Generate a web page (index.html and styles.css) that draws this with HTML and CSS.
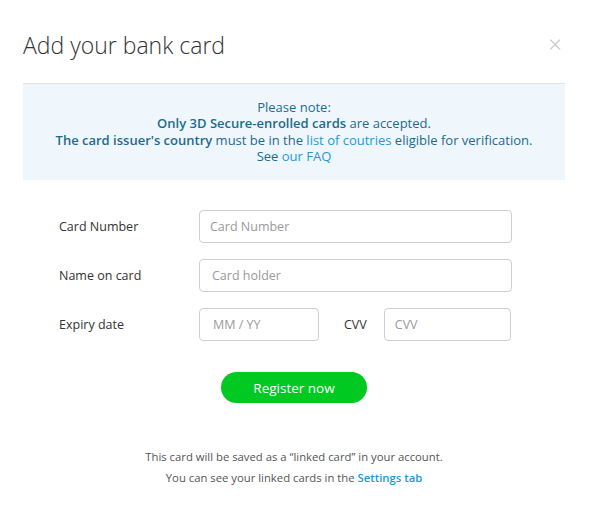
FILE: index.html
```html
<!DOCTYPE html>
<html lang="en">
<head>
  <meta charset="UTF-8" />
  <title>Add your bank card</title>
  <link rel="stylesheet" href="styles.css">
</head>
<body>
  <div class="modal">
    <div class="modal-header">
      <h1>Add your bank card</h1>
      <span class="close">&times;</span>
    </div>

    <div class="note">
      <p>Please note:</p>
      <p><b>Only 3D Secure-enrolled cards</b> are accepted.</p>
      <p><b>The card issuer's country</b> must be in the <a href="#">list of coutries</a> eligible for verification.</p>
      <p>See <a href="#">our FAQ</a></p>
    </div>

    <form class="card-form">
      <div class="row">
        <label>Card Number</label>
        <input class="wide" type="text" placeholder="Card Number">
      </div>
      <div class="row">
        <label>Name on card</label>
        <input class="wide holder" type="text" placeholder="Card holder">
      </div>
      <div class="row">
        <label>Expiry date</label>
        <input class="expiry" type="text" placeholder="MM / YY">
        <label class="cvv-label">CVV</label>
        <input class="cvv" type="text" placeholder="CVV">
      </div>
      <div class="actions">
        <button type="button">Register now</button>
      </div>
    </form>

    <div class="footer">
      <p>This card will be saved as a “linked card” in your account.</p>
      <p>You can see your linked cards in the <a href="#">Settings tab</a></p>
    </div>
  </div>
</body>
</html>
```

FILE: styles.css
```css
body {
  margin: 0;
  background: #fff;
  font-family: "Open Sans", Arial, sans-serif;
  color: #333;
}

.modal {
  width: 590px;
  padding: 0 25px 0 23px;
  box-sizing: border-box;
}

.modal-header {
  height: 84px;
  border-bottom: 1px solid #e3e3e3;
  display: flex;
  align-items: center;
  justify-content: space-between;
  box-sizing: border-box;
  padding-top: 6px;
}

.modal-header h1 {
  margin: 0;
  font-size: 23px;
  font-weight: 300;
  color: #333;
}

.close {
  font-size: 24px;
  font-weight: 300;
  color: #c4c4c4;
  margin-right: 3px;
  margin-top: -2px;
}

.note {
  background: #eff7fd;
  height: 96px;
  box-sizing: border-box;
  padding-top: 15px;
  text-align: center;
  font-size: 13px;
  line-height: 16.4px;
  color: #1d6b8c;
}

.note p {
  margin: 0;
}

.note b {
  font-weight: 600;
}

.note a {
  color: #1b9ad8;
  text-decoration: none;
}

.card-form {
  padding: 30px 0 0 36px;
}

.row {
  display: flex;
  align-items: center;
  margin-bottom: 16px;
  font-size: 12.5px;
}

.row label {
  width: 140px;
  color: #333;
}

.row input {
  height: 33px;
  box-sizing: border-box;
  border: 1px solid #cfcfcf;
  border-radius: 4px;
  padding: 0 10px;
  font-family: inherit;
  font-size: 12.5px;
  color: #333;
}

.row input::placeholder {
  color: #9a9a9a;
}

.row input.wide {
  width: 313px;
}

.row input.holder {
  padding-left: 12px;
}

.row input.expiry {
  width: 120px;
  padding-left: 13px;
}

.row label.cvv-label {
  width: auto;
  margin: 0 17px 0 25px;
}

.row input.cvv {
  width: 127px;
}

.actions {
  padding: 15px 0 0 162px;
}

.actions button {
  width: 146px;
  height: 31px;
  border: none;
  border-radius: 16px;
  background: #00c922;
  color: #fff;
  font-family: inherit;
  font-size: 13.5px;
  padding: 0;
}

.footer {
  margin-top: 43px;
  text-align: center;
  font-size: 11.3px;
  color: #555;
  line-height: 21px;
}

.footer p {
  margin: 0;
}

.footer a {
  color: #1b9ad8;
  font-weight: 600;
  text-decoration: none;
}
```
